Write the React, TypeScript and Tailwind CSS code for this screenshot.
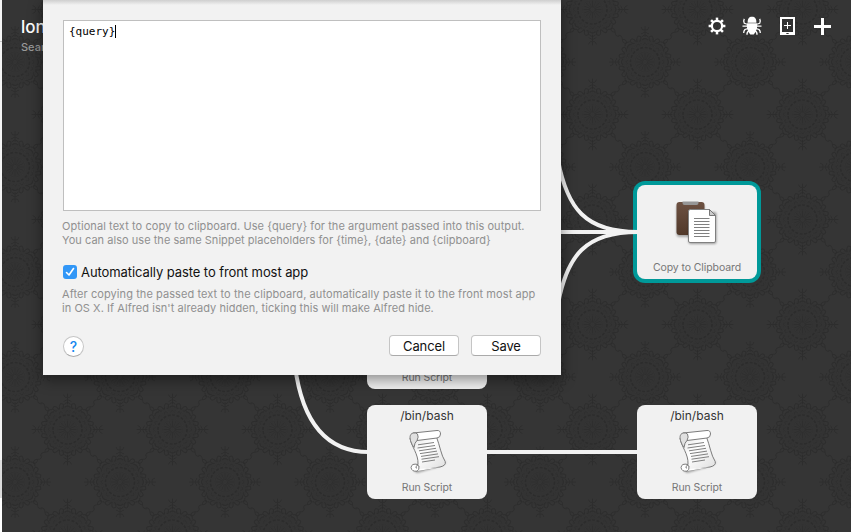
import type { ReactNode } from "react";

const FONT = "font-['Inter','Liberation_Sans',sans-serif]";

function Rosette({ x, y }: { x: number; y: number }) {
  const turns = [0, 45, 90, 135, 180, 225, 270, 315];
  const fine = Array.from({ length: 16 }, (_, i) => i * 22.5);
  return (
    <g transform={`translate(${x} ${y})`} fill="none" stroke="#2b2b2b" strokeWidth="1">
      <circle r="24" fill="#2d2d2d" fillOpacity="0.28" stroke="none" />
      <circle r="14.5" strokeWidth="1.7" strokeDasharray="3 1.5" strokeOpacity="0.95" />
      <circle r="10" strokeOpacity="0.3" />
      <circle r="19" strokeOpacity="0.4" strokeDasharray="2 1.5" />
      {fine.map((a) => (
        <path key={a} transform={`rotate(${a})`} strokeOpacity="0.6" d="M0 -2V-9M-2 -17Q0 -21 2 -17" />
      ))}
      {turns.map((a) => (
        <g key={a} transform={`rotate(${a})`} strokeOpacity="0.75" strokeWidth="1.2">
          <path d="M-8 -20Q-9 -28 -4 -25Q-4 -20 -6 -21M8 -20Q9 -28 4 -25Q4 -20 6 -21" />
          <path d="M-3 -25Q0 -29 3 -25M-3 -22Q0 -25 3 -22" />
        </g>
      ))}
      {[0, 90, 180, 270].map((a) => (
        <path key={a} transform={`rotate(${a})`} strokeOpacity="0.85" d="M0 -25V-32Q-3 -31 -4 -35M0 -32Q3 -31 4 -35M0 -32V-36M-4 -28L0 -30L4 -28" />
      ))}
      {[45, 135, 225, 315].map((a) => (
        <path key={a} transform={`rotate(${a})`} strokeOpacity="0.75" d="M0 -26Q-3 -29 0 -32Q3 -35 0 -38M0 -26Q3 -29 0 -32" />
      ))}
    </g>
  );
}

function Backdrop() {
  return (
    <svg className="absolute inset-0 size-full" aria-hidden="true">
      <defs>
        <pattern id="damask" width="105" height="105" patternUnits="userSpaceOnUse" x="-2">
          <Rosette x={67.5} y={9.5} />
          <Rosette x={67.5} y={114.5} />
          <Rosette x={15} y={62} />
          <Rosette x={120} y={62} />
        </pattern>
      </defs>
      <rect width="100%" height="100%" fill="url(#damask)" />
    </svg>
  );
}

function Links() {
  return (
    <svg className="absolute top-0 -left-[2px] h-[532px] w-[851px]" fill="none" stroke="#f2f2f2" strokeWidth="4" aria-hidden="true">
      <path d="M295 366C302 420 325 452 369 452" />
      <path d="M486 452H638" />
      <path d="M558 160C567 208 585 232 638 232" />
      <path d="M555 232H638" />
      <path d="M558 304C567 256 585 232 638 232" />
    </svg>
  );
}

function GearIcon() {
  return (
    <svg width="18" height="18" viewBox="0 0 18 18" fill="none" stroke="#fff">
      <circle cx="9" cy="9" r="5.1" strokeWidth="2.2" />
      {[0, 45, 90, 135, 180, 225, 270, 315].map((a) => (
        <path key={a} transform={`rotate(${a} 9 9)`} d="M9 4V.6" strokeWidth="2.5" />
      ))}
    </svg>
  );
}

function BugIcon() {
  return (
    <svg width="20" height="20" viewBox="0 0 20 20" fill="#fff">
      <path d="M5.6 6.7C5.6 2.4 7 .7 10 .7s4.4 1.7 4.4 6Z" />
      <path d="M5.2 7.2h9.600l.5 2.6c-.2 4-2.200 7.400-3.600 8.700h-3.400C6.900 17.200 4.900 13.800 4.700 9.800Z" />
      <path
        d="M6 8.500L2.300 7.300Q1 5.500 2.300 2.900M14 8.500l3.700-1.200Q19 5.500 17.700 2.900M6 10.200H.5M14 10.200h5.500M6.500 12.300L3 13.500Q1.600 15 1.700 17M13.500 12.300L17 13.500Q18.400 15 18.300 17M7 14.600Q4.700 16 5 18.800M13 14.600Q15.300 16 15 18.800"
        fill="none"
        stroke="#fff"
        strokeWidth="1.3"
      />
    </svg>
  );
}

function TabletIcon() {
  return (
    <svg width="15" height="18" viewBox="0 0 15 18" shapeRendering="crispEdges">
      <path fill="#fff" fillRule="evenodd" d="M0 0h15v18H0ZM2 2v13h11V2Z" />
      <path fill="#fff" d="M7 5h1v3h3v1H8v3H7V9H4V8h3Z" />
      <path fill="#777" d="M6 16h3v1H6Z" />
      <path fill="#333" d="M7 16h1v1H7Z" />
    </svg>
  );
}

function PlusIcon() {
  return (
    <svg width="17" height="17" viewBox="0 0 17 17" shapeRendering="crispEdges">
      <path fill="#fff" d="M7 0h3v7h7v3h-7v7H7v-7H0V7h7Z" />
    </svg>
  );
}

function ScrollIcon() {
  return (
    <svg width="42" height="48" viewBox="0 0 42 48" className="block">
      <defs>
        <linearGradient id="paper" x1="0" y1="0" x2="1" y2="1">
          <stop offset="0" stopColor="#e2e2e2" />
          <stop offset=".4" stopColor="#fff" />
          <stop offset="1" stopColor="#ddd" />
        </linearGradient>
        <filter id="soft" x="-20%" y="-20%" width="140%" height="140%">
          <feGaussianBlur stdDeviation="1.3" />
        </filter>
      </defs>
      <path d="M5 41L35 37Q39 35 37 31V36L9 44Z" fill="#000" opacity=".35" filter="url(#soft)" />
      <g stroke="#7b7b7b" strokeWidth="1" strokeLinejoin="round">
        <path fill="url(#paper)" d="M2 9C3.500 18 10.500 25 10 35L8 42L32 38Q38.500 36.500 37.200 32.500C33 26 32 17 28.500 8Z" />
        <path fill="#fff" d="M9 35.500Q2.500 34 2 38.500Q2.500 42.700 8 42.200L32 38.200L10 40Z" stroke="none" />
        <path fill="#fff" d="M10 35.500Q3.500 34 3 38.500Q3.500 42.700 9 42.200Q11.500 41 11 37Q9 35.500 8 37.500Q7.500 39.500 9 39" />
        <path fill="#fff" d="M5 4L29 1.500Q32.500 1.200 32.500 5Q32.500 8.500 29 9L9 11.500Z" />
        <path fill="#e0e0e0" d="M5 4C1.500 5 1.500 9 3 13Q4 16 6 18.500Q6.500 13.500 9 11.500Q11 8 9.500 5Q8 3.500 5 4Z" />
      </g>
      <path d="M10 15.800l16-2.300M9.500 19l17.500-2.500M11 21.800l17-2.500M12 24.600l17-2.500M13 27.400l17-2.500M13.500 30.200l17.500-2.500M14 33l13-2" stroke="#808080" strokeWidth="1" fill="none" />
    </svg>
  );
}

function ClipboardIcon() {
  return (
    <svg width="48" height="48" viewBox="0 0 48 48" className="block">
      <defs>
        <linearGradient id="board" x1="0" y1="0" x2="0" y2="1">
          <stop offset="0" stopColor="#6d5142" />
          <stop offset="1" stopColor="#51392a" />
        </linearGradient>
        <filter id="haze" x="-20%" y="-20%" width="140%" height="140%">
          <feGaussianBlur stdDeviation="1.200" />
        </filter>
      </defs>
      <rect x="3.500" y="5" width="28" height="33" rx="3" opacity=".3" filter="url(#haze)" />
      <rect x="3.500" y="3" width="28" height="33" rx="3" fill="url(#board)" />
      <path d="M9.500 2.500h16v1.500q0 2-2 2H11.500q-2 0-2-2Z" fill="#969696" />
      <rect x="15.500" y="13" width="28" height="32" rx="2" opacity=".35" filter="url(#haze)" />
      <path d="M17.500 10.500H36.500L42.500 16.500V42Q42.500 43.500 41 43.500H17Q15.500 43.500 15.500 42V12Q15.500 10.500 17.500 10.500Z" fill="#fff" stroke="#808080" />
      <path d="M36.500 10.500V16.500H42.500Z" fill="#ccc" stroke="#777" />
      <path d="M21 19.500h15.500M21 22.500h15.500M21 25.500h15.500M21 28.500h15.500M21 31.500h15.500M21 34.500h15.500M21 37.500h15.500" stroke="#808080" />
    </svg>
  );
}

function Node({ place, title, label, selected, children }: { place: string; title?: string; label: string; selected?: boolean; children: ReactNode }) {
  return (
    <div className={`absolute flex h-[94px] w-[120px] flex-col items-center rounded-lg bg-[#f1f1f1] ${selected ? "ring-4 ring-[#009999]" : ""} ${place}`}>
      <div className="h-[22px] pt-px text-[12px] leading-[20px] whitespace-nowrap text-[#333]">{title}</div>
      <div className={selected ? "-mt-[8px]" : "mt-[2px] pl-[4px]"}>{children}</div>
      <div className="absolute bottom-[4px] text-[10.500px] leading-[15px] tracking-[-0.1px] whitespace-nowrap text-[#777]">{label}</div>
    </div>
  );
}

function Sheet() {
  return (
    <section className="absolute top-0 left-[41px] flex h-[375px] w-[518px] flex-col bg-[#f2f2f2] px-5 pt-5 shadow-[0_4px_14px_rgba(0,0,0,0.45)]">
      <div className="absolute inset-x-0 top-0 h-[5px] bg-gradient-to-b from-[#cfcfcf] to-[#f2f2f2]" />
      <div className="flex h-[191px] w-[478px] shrink-0 border border-[#bfbfbf] bg-white px-[5px] pt-[4px] font-['DejaVu_Sans_Mono',monospace] text-[11px] leading-[13px] text-black">
        <span>{"{query}"}</span>
        <span className="h-[13px] w-px bg-black" />
      </div>
      <p className="mt-[8px] -ml-px text-[11px] leading-[14px] tracking-[0.07px] whitespace-nowrap text-[#909090]">
        Optional text to copy to clipboard. Use {"{query}"} for the argument passed into this output.
        <br />
        <span className="tracking-[0.035px]">You can also use the same Snippet placeholders for {"{time}"}, {"{date}"} and {"{clipboard}"}</span>
      </p>
      <label className="mt-[16px] flex h-[18px] items-center gap-[4px] text-[13px] whitespace-nowrap text-[#111]">
        <span className="flex size-[14px] items-center justify-center rounded-[3px] bg-[#3297f7]">
          <svg width="10" height="10" viewBox="0 0 10 10" fill="none" stroke="#fff" strokeWidth="1.600" strokeLinecap="round" strokeLinejoin="round">
            <path d="M1.500 5.500L4 8L8.500 1.500" />
          </svg>
        </span>
        <span className="pt-px tracking-[-0.08px]">Automatically paste to front most app</span>
      </label>
      <p className="mt-[6px] -ml-px text-[11px] leading-[14px] tracking-[0.08px] whitespace-nowrap text-[#909090]">
        After copying the passed text to the clipboard, automatically paste it to the front most app
        <br />
        <span className="tracking-[0.05px]">in OS X. If Alfred isn't already hidden, ticking this will make Alfred hide.</span>
      </p>
      <div className="mt-[20px] flex items-start">
        <button className="mt-px flex size-[21px] items-center justify-center rounded-full border border-[#c5c5c5] border-b-[#aaa] bg-white text-[14px] leading-none font-medium text-[#1687ee]">?</button>
        <button className="ml-auto h-[21px] w-[70px] rounded-[4px] border border-[#c5c5c5] border-b-[#aaa] bg-white text-[13px] leading-[18px] tracking-[-0.1px] text-[#111]">Cancel</button>
        <button className="ml-[12px] h-[21px] w-[70px] rounded-[4px] border border-[#c5c5c5] border-b-[#aaa] bg-white text-[13px] leading-[18px] tracking-[-0.1px] text-[#111]">Save</button>
      </div>
    </section>
  );
}

export default function App() {
  return (
    <div className={`flex h-[532px] w-[851px] overflow-hidden ${FONT}`}>
      <div className="flex w-[2px] shrink-0 flex-col bg-[#f4f4f4]">
        <div className="mt-[41px] h-px bg-[#c4c4c4]" />
        <div className="mt-[418px] h-[38px] bg-[#dcdcdc]" />
        <div className="flex-1 bg-white" />
      </div>
      <main className="relative flex-1 overflow-hidden bg-[#353535]">
        <Backdrop />
        <header className="relative flex items-start pt-[17px] pr-[20px] pl-[19px]">
          <div className="flex-1">
            <h1 className="text-[17px] leading-[20px] font-medium text-white">lon</h1>
            <p className="mt-[3px] text-[11px] leading-[14px] font-medium text-[#999]">Sear</p>
          </div>
          <div className="-mt-px flex h-[20px] items-center">
            <GearIcon />
            <span className="ml-[16px]"><BugIcon /></span>
            <span className="ml-[18px]"><TabletIcon /></span>
            <span className="ml-[19px]"><PlusIcon /></span>
          </div>
        </header>
        <Node place="top-[295px] left-[365px]" label="Run Script">{null}</Node>
        <Node place="top-[405px] left-[365px]" title="/bin/bash" label="Run Script"><ScrollIcon /></Node>
        <Node place="top-[405px] left-[635px]" title="/bin/bash" label="Run Script"><ScrollIcon /></Node>
        <Node place="top-[185px] left-[635px]" label="Copy to Clipboard" selected><ClipboardIcon /></Node>
        <Links />
        <Sheet />
      </main>
    </div>
  );
}
